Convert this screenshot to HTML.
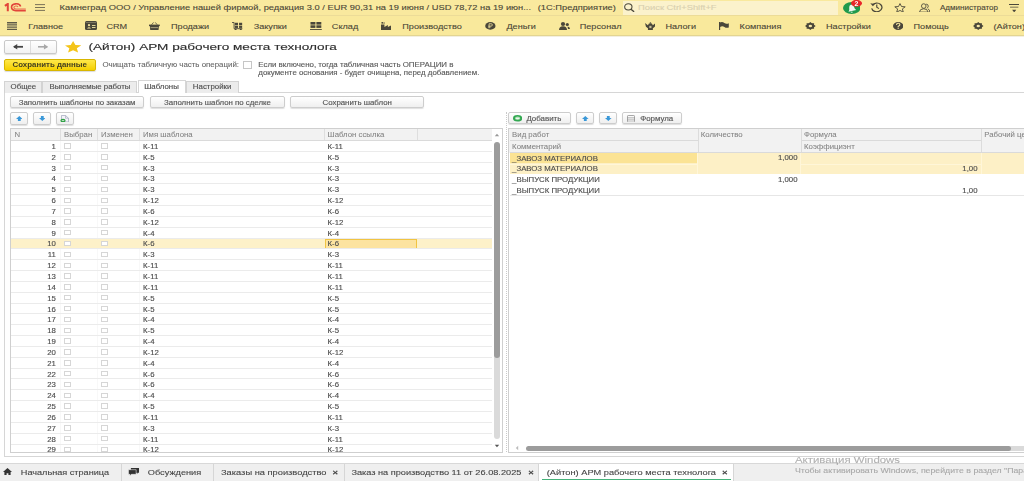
<!DOCTYPE html><html><head><meta charset="utf-8"><style>
*{margin:0;padding:0;box-sizing:border-box}
html,body{width:1024px;height:481px;overflow:hidden;background:#fff;font-family:"Liberation Sans",sans-serif}
#r{position:relative;width:1024px;height:481px;overflow:hidden;filter:blur(0.4px)}
#r div,#r span,#r svg{position:absolute}
.t{white-space:nowrap;color:#4d4d4d;-webkit-text-stroke:0.15px currentColor}
</style></head><body><div id="r"><div style="left:0px;top:0px;width:1024px;height:15.5px;background:#f9e99e"></div>
<div style="left:0px;top:15px;width:1024px;height:1px;background:#ecdc98"></div>
<div style="left:0px;top:16px;width:1024px;height:19px;background:#f9e99c"></div>
<div style="left:0px;top:34.6px;width:1024px;height:1px;background:#e3d592"></div>
<div style="left:0px;top:35.6px;width:1024px;height:1px;background:#f3efe0"></div>
<span class="t" style="left:59.6px;top:2.2px;font-size:9.33px;line-height:11.2px;transform:scaleY(0.82);color:#4a4636;-webkit-text-stroke:0.12px">Камнеград ООО / Управление нашей фирмой, редакция 3.0 / EUR 90,31 на 19 июня / USD 78,72 на 19 июн...</span>
<span class="t" style="left:537.7px;top:2.2px;font-size:9.33px;line-height:11.2px;transform:scaleY(0.82);color:#4a4636;-webkit-text-stroke:0.12px">(1С:Предприятие)</span>
<div style="left:622.5px;top:1px;width:215px;height:13.6px;background:#fbf2cc"></div>
<span class="t" style="left:638px;top:2.16px;font-size:9.4px;line-height:11.28px;transform:scaleY(0.82);color:#d9d0b0">Поиск Ctrl+Shift+F</span>
<span class="t" style="left:940px;top:2.97px;font-size:8.04px;line-height:9.65px;transform:scaleY(0.82);color:#4a4636;-webkit-text-stroke:0.12px">Администратор</span>
<span class="t" style="left:28.3px;top:20.51px;font-size:9.15px;line-height:10.98px;transform:scaleY(0.82);color:#4a4636;-webkit-text-stroke:0.12px">Главное</span>
<span class="t" style="left:106.4px;top:20.51px;font-size:9.15px;line-height:10.98px;transform:scaleY(0.82);color:#4a4636;-webkit-text-stroke:0.12px">CRM</span>
<span class="t" style="left:171px;top:20.51px;font-size:9.15px;line-height:10.98px;transform:scaleY(0.82);color:#4a4636;-webkit-text-stroke:0.12px">Продажи</span>
<span class="t" style="left:253.7px;top:20.51px;font-size:9.15px;line-height:10.98px;transform:scaleY(0.82);color:#4a4636;-webkit-text-stroke:0.12px">Закупки</span>
<span class="t" style="left:331.8px;top:20.51px;font-size:9.15px;line-height:10.98px;transform:scaleY(0.82);color:#4a4636;-webkit-text-stroke:0.12px">Склад</span>
<span class="t" style="left:402.3px;top:20.51px;font-size:9.15px;line-height:10.98px;transform:scaleY(0.82);color:#4a4636;-webkit-text-stroke:0.12px">Производство</span>
<span class="t" style="left:506.4px;top:20.51px;font-size:9.15px;line-height:10.98px;transform:scaleY(0.82);color:#4a4636;-webkit-text-stroke:0.12px">Деньги</span>
<span class="t" style="left:579.7px;top:20.51px;font-size:9.15px;line-height:10.98px;transform:scaleY(0.82);color:#4a4636;-webkit-text-stroke:0.12px">Персонал</span>
<span class="t" style="left:665.4px;top:20.51px;font-size:9.15px;line-height:10.98px;transform:scaleY(0.82);color:#4a4636;-webkit-text-stroke:0.12px">Налоги</span>
<span class="t" style="left:739.6px;top:20.51px;font-size:9.15px;line-height:10.98px;transform:scaleY(0.82);color:#4a4636;-webkit-text-stroke:0.12px">Компания</span>
<span class="t" style="left:826px;top:20.51px;font-size:9.15px;line-height:10.98px;transform:scaleY(0.82);color:#4a4636;-webkit-text-stroke:0.12px">Настройки</span>
<span class="t" style="left:913.5px;top:20.51px;font-size:9.15px;line-height:10.98px;transform:scaleY(0.82);color:#4a4636;-webkit-text-stroke:0.12px">Помощь</span>
<span class="t" style="left:993.5px;top:20.51px;font-size:9.15px;line-height:10.98px;transform:scaleY(0.82);color:#4a4636;-webkit-text-stroke:0.12px">(Айтон) АРМ рабочего места технолога</span>
<div style="left:4px;top:40px;width:53px;height:14px;border:1px solid #c9c9c9;border-radius:2px;background:linear-gradient(#fff,#f2f2f2);box-shadow:0 1px 1px rgba(0,0,0,.12)"></div>
<div style="left:30px;top:41px;width:1px;height:12px;background:#dcdcdc"></div>
<span class="t" style="left:88.5px;top:39.44px;font-size:13.6px;line-height:16.32px;transform:scaleY(0.72);color:#2e2e2e;-webkit-text-stroke:0.2px #2e2e2e">(Айтон) АРМ рабочего места технолога</span>
<div style="left:4px;top:59px;width:92px;height:12px;border:1px solid #d8b600;border-radius:2px;background:linear-gradient(#ffe84a,#f5d000);box-shadow:0 1px 1px rgba(0,0,0,.15)"></div>
<span class="t" style="left:12.5px;top:60.46px;font-size:7.9px;line-height:9.48px;transform:scaleY(0.82);color:#45411f;font-weight:bold;-webkit-text-stroke:0">Сохранить данные</span>
<span class="t" style="left:102.4px;top:60.26px;font-size:7.9px;line-height:9.48px;transform:scaleY(0.82);color:#666;-webkit-text-stroke:0.1px">Очищать табличную часть операций:</span>
<div style="left:243px;top:61px;width:9px;height:8px;border:1px solid #c6c6c6;background:#fff"></div>
<span class="t" style="left:258.3px;top:59.96px;font-size:7.9px;line-height:9.48px;transform:scaleY(0.82);color:#5a5a5a;-webkit-text-stroke:0.15px">Если включено, тогда табличная часть ОПЕРАЦИИ в</span>
<span class="t" style="left:258.3px;top:68.16px;font-size:7.9px;line-height:9.48px;transform:scaleY(0.82);color:#5a5a5a;-webkit-text-stroke:0.15px">документе основания - будет очищена, перед добавлением.</span>
<div style="left:4px;top:92px;width:1030px;height:365px;border:1px solid #d6d6d6;background:#fff"></div>
<div style="left:4.4px;top:81px;width:38.0px;height:11.5px;border:1px solid #d3d3d3;border-bottom:none;background:#ececec"></div>
<span class="t" style="left:23.4px;top:81.69px;font-size:7.85px;line-height:9.42px;transform:translateX(-50%) scaleY(0.8);color:#4f4f4f;;-webkit-text-stroke:0.15px">Общее</span>
<div style="left:42.4px;top:81px;width:95.1px;height:11.5px;border:1px solid #d3d3d3;border-bottom:none;background:#ececec"></div>
<span class="t" style="left:89.95px;top:81.69px;font-size:7.85px;line-height:9.42px;transform:translateX(-50%) scaleY(0.8);color:#4f4f4f;;-webkit-text-stroke:0.15px">Выполняемые работы</span>
<div style="left:137.5px;top:80px;width:48.0px;height:13px;border:1px solid #d6d6d6;border-bottom:none;background:#fff"></div>
<span class="t" style="left:161.5px;top:81.69px;font-size:7.85px;line-height:9.42px;transform:translateX(-50%) scaleY(0.8);color:#4f4f4f;;-webkit-text-stroke:0.15px">Шаблоны</span>
<div style="left:185.5px;top:81px;width:53.19999999999999px;height:11.5px;border:1px solid #d3d3d3;border-bottom:none;background:#ececec"></div>
<span class="t" style="left:212.1px;top:81.69px;font-size:7.85px;line-height:9.42px;transform:translateX(-50%) scaleY(0.8);color:#4f4f4f;;-webkit-text-stroke:0.15px">Настройки</span>
<div style="left:10px;top:96px;width:134px;height:12px;border:1px solid #cdcdcd;border-radius:2px;background:linear-gradient(#fff,#efefef);box-shadow:0 1px 1px rgba(0,0,0,.13)"></div>
<span class="t" style="left:77.1px;top:97.69px;font-size:7.85px;line-height:9.42px;transform:translateX(-50%) scaleY(0.82);;color:#555">Заполнить шаблоны по заказам</span>
<div style="left:150px;top:96px;width:135px;height:12px;border:1px solid #cdcdcd;border-radius:2px;background:linear-gradient(#fff,#efefef);box-shadow:0 1px 1px rgba(0,0,0,.13)"></div>
<span class="t" style="left:217.5px;top:97.69px;font-size:7.85px;line-height:9.42px;transform:translateX(-50%) scaleY(0.82);;color:#555">Заполнить шаблон по сделке</span>
<div style="left:290px;top:96px;width:134px;height:12px;border:1px solid #cdcdcd;border-radius:2px;background:linear-gradient(#fff,#efefef);box-shadow:0 1px 1px rgba(0,0,0,.13)"></div>
<span class="t" style="left:357.2px;top:97.69px;font-size:7.85px;line-height:9.42px;transform:translateX(-50%) scaleY(0.82);;color:#555">Сохранить шаблон</span>
<div style="left:10px;top:112px;width:18px;height:13px;border:1px solid #cdcdcd;border-radius:2px;background:linear-gradient(#fff,#efefef);box-shadow:0 1px 1px rgba(0,0,0,.13)"></div>
<div style="left:33px;top:112px;width:18px;height:13px;border:1px solid #cdcdcd;border-radius:2px;background:linear-gradient(#fff,#efefef);box-shadow:0 1px 1px rgba(0,0,0,.13)"></div>
<div style="left:56px;top:112px;width:18px;height:13px;border:1px solid #cdcdcd;border-radius:2px;background:linear-gradient(#fff,#efefef);box-shadow:0 1px 1px rgba(0,0,0,.13)"></div>
<div style="left:10px;top:128px;width:493px;height:325px;border:1px solid #cfcfcf;background:#fff"></div>
<div style="left:11px;top:129px;width:481px;height:12px;background:#f2f2f2;border-bottom:1px solid #dadada"></div>
<div style="left:60px;top:129px;width:1px;height:11px;background:#dedede"></div>
<div style="left:97px;top:129px;width:1px;height:11px;background:#dedede"></div>
<div style="left:139px;top:129px;width:1px;height:11px;background:#dedede"></div>
<div style="left:324px;top:129px;width:1px;height:11px;background:#dedede"></div>
<div style="left:417px;top:129px;width:1px;height:11px;background:#dedede"></div>
<span class="t" style="left:14.4px;top:129.72px;font-size:7.8px;line-height:9.36px;transform:scaleY(0.82);color:#808080;-webkit-text-stroke:0.05px">N</span>
<span class="t" style="left:64px;top:129.72px;font-size:7.8px;line-height:9.36px;transform:scaleY(0.82);color:#808080;-webkit-text-stroke:0.05px">Выбран</span>
<span class="t" style="left:101px;top:129.72px;font-size:7.8px;line-height:9.36px;transform:scaleY(0.82);color:#808080;-webkit-text-stroke:0.05px">Изменен</span>
<span class="t" style="left:143px;top:129.72px;font-size:7.8px;line-height:9.36px;transform:scaleY(0.82);color:#808080;-webkit-text-stroke:0.05px">Имя шаблона</span>
<span class="t" style="left:327.5px;top:129.72px;font-size:7.8px;line-height:9.36px;transform:scaleY(0.82);color:#808080;-webkit-text-stroke:0.05px">Шаблон ссылка</span>
<div style="left:11px;top:141px;width:481px;height:311px;overflow:hidden">
<div style="left:49px;top:0;width:1px;height:311px;background:#f8f8f8"></div>
<div style="left:86px;top:0;width:1px;height:311px;background:#f8f8f8"></div>
<div style="left:128px;top:0;width:1px;height:311px;background:#f8f8f8"></div>
<div style="left:0;top:9.84px;width:481px;height:1px;background:#ebebeb"></div>
<span class="t" style="right:436.20px;top:0.92px;font-size:7.8px;line-height:10px;transform:scaleY(0.82)">1</span>
<div style="left:53.00px;top:2.32px;width:6.6px;height:5.4px;border:1px solid #d6d6d6;background:#fff"></div>
<div style="left:90.25px;top:2.32px;width:6.6px;height:5.4px;border:1px solid #d6d6d6;background:#fff"></div>
<span class="t" style="left:132.00px;top:0.92px;font-size:7.8px;line-height:10px;transform:scaleY(0.82)">К-11</span>
<span class="t" style="left:316.50px;top:0.92px;font-size:7.8px;line-height:10px;transform:scaleY(0.82)">К-11</span>
<div style="left:0;top:20.68px;width:481px;height:1px;background:#ebebeb"></div>
<span class="t" style="right:436.20px;top:11.76px;font-size:7.8px;line-height:10px;transform:scaleY(0.82)">2</span>
<div style="left:53.00px;top:13.16px;width:6.6px;height:5.4px;border:1px solid #d6d6d6;background:#fff"></div>
<div style="left:90.25px;top:13.16px;width:6.6px;height:5.4px;border:1px solid #d6d6d6;background:#fff"></div>
<span class="t" style="left:132.00px;top:11.76px;font-size:7.8px;line-height:10px;transform:scaleY(0.82)">К-5</span>
<span class="t" style="left:316.50px;top:11.76px;font-size:7.8px;line-height:10px;transform:scaleY(0.82)">К-5</span>
<div style="left:0;top:31.52px;width:481px;height:1px;background:#ebebeb"></div>
<span class="t" style="right:436.20px;top:22.60px;font-size:7.8px;line-height:10px;transform:scaleY(0.82)">3</span>
<div style="left:53.00px;top:24.00px;width:6.6px;height:5.4px;border:1px solid #d6d6d6;background:#fff"></div>
<div style="left:90.25px;top:24.00px;width:6.6px;height:5.4px;border:1px solid #d6d6d6;background:#fff"></div>
<span class="t" style="left:132.00px;top:22.60px;font-size:7.8px;line-height:10px;transform:scaleY(0.82)">К-3</span>
<span class="t" style="left:316.50px;top:22.60px;font-size:7.8px;line-height:10px;transform:scaleY(0.82)">К-3</span>
<div style="left:0;top:42.36px;width:481px;height:1px;background:#ebebeb"></div>
<span class="t" style="right:436.20px;top:33.44px;font-size:7.8px;line-height:10px;transform:scaleY(0.82)">4</span>
<div style="left:53.00px;top:34.84px;width:6.6px;height:5.4px;border:1px solid #d6d6d6;background:#fff"></div>
<div style="left:90.25px;top:34.84px;width:6.6px;height:5.4px;border:1px solid #d6d6d6;background:#fff"></div>
<span class="t" style="left:132.00px;top:33.44px;font-size:7.8px;line-height:10px;transform:scaleY(0.82)">К-3</span>
<span class="t" style="left:316.50px;top:33.44px;font-size:7.8px;line-height:10px;transform:scaleY(0.82)">К-3</span>
<div style="left:0;top:53.20px;width:481px;height:1px;background:#ebebeb"></div>
<span class="t" style="right:436.20px;top:44.28px;font-size:7.8px;line-height:10px;transform:scaleY(0.82)">5</span>
<div style="left:53.00px;top:45.68px;width:6.6px;height:5.4px;border:1px solid #d6d6d6;background:#fff"></div>
<div style="left:90.25px;top:45.68px;width:6.6px;height:5.4px;border:1px solid #d6d6d6;background:#fff"></div>
<span class="t" style="left:132.00px;top:44.28px;font-size:7.8px;line-height:10px;transform:scaleY(0.82)">К-3</span>
<span class="t" style="left:316.50px;top:44.28px;font-size:7.8px;line-height:10px;transform:scaleY(0.82)">К-3</span>
<div style="left:0;top:64.04px;width:481px;height:1px;background:#ebebeb"></div>
<span class="t" style="right:436.20px;top:55.12px;font-size:7.8px;line-height:10px;transform:scaleY(0.82)">6</span>
<div style="left:53.00px;top:56.52px;width:6.6px;height:5.4px;border:1px solid #d6d6d6;background:#fff"></div>
<div style="left:90.25px;top:56.52px;width:6.6px;height:5.4px;border:1px solid #d6d6d6;background:#fff"></div>
<span class="t" style="left:132.00px;top:55.12px;font-size:7.8px;line-height:10px;transform:scaleY(0.82)">К-12</span>
<span class="t" style="left:316.50px;top:55.12px;font-size:7.8px;line-height:10px;transform:scaleY(0.82)">К-12</span>
<div style="left:0;top:74.88px;width:481px;height:1px;background:#ebebeb"></div>
<span class="t" style="right:436.20px;top:65.96px;font-size:7.8px;line-height:10px;transform:scaleY(0.82)">7</span>
<div style="left:53.00px;top:67.36px;width:6.6px;height:5.4px;border:1px solid #d6d6d6;background:#fff"></div>
<div style="left:90.25px;top:67.36px;width:6.6px;height:5.4px;border:1px solid #d6d6d6;background:#fff"></div>
<span class="t" style="left:132.00px;top:65.96px;font-size:7.8px;line-height:10px;transform:scaleY(0.82)">К-6</span>
<span class="t" style="left:316.50px;top:65.96px;font-size:7.8px;line-height:10px;transform:scaleY(0.82)">К-6</span>
<div style="left:0;top:85.72px;width:481px;height:1px;background:#ebebeb"></div>
<span class="t" style="right:436.20px;top:76.80px;font-size:7.8px;line-height:10px;transform:scaleY(0.82)">8</span>
<div style="left:53.00px;top:78.20px;width:6.6px;height:5.4px;border:1px solid #d6d6d6;background:#fff"></div>
<div style="left:90.25px;top:78.20px;width:6.6px;height:5.4px;border:1px solid #d6d6d6;background:#fff"></div>
<span class="t" style="left:132.00px;top:76.80px;font-size:7.8px;line-height:10px;transform:scaleY(0.82)">К-12</span>
<span class="t" style="left:316.50px;top:76.80px;font-size:7.8px;line-height:10px;transform:scaleY(0.82)">К-12</span>
<div style="left:0;top:96.56px;width:481px;height:1px;background:#ebebeb"></div>
<span class="t" style="right:436.20px;top:87.64px;font-size:7.8px;line-height:10px;transform:scaleY(0.82)">9</span>
<div style="left:53.00px;top:89.04px;width:6.6px;height:5.4px;border:1px solid #d6d6d6;background:#fff"></div>
<div style="left:90.25px;top:89.04px;width:6.6px;height:5.4px;border:1px solid #d6d6d6;background:#fff"></div>
<span class="t" style="left:132.00px;top:87.64px;font-size:7.8px;line-height:10px;transform:scaleY(0.82)">К-4</span>
<span class="t" style="left:316.50px;top:87.64px;font-size:7.8px;line-height:10px;transform:scaleY(0.82)">К-4</span>
<div style="left:0;top:97.56px;width:481px;height:10.84px;background:#fdf1c9"></div>
<div style="left:313.60px;top:97.96px;width:92.3px;height:10.04px;border:1px solid #f1c442;background:#fce3a0"></div>
<div style="left:0;top:107.40px;width:481px;height:1px;background:#ebebeb"></div>
<span class="t" style="right:436.20px;top:98.48px;font-size:7.8px;line-height:10px;transform:scaleY(0.82)">10</span>
<div style="left:53.00px;top:99.88px;width:6.6px;height:5.4px;border:1px solid #d6d6d6;background:#fff"></div>
<div style="left:90.25px;top:99.88px;width:6.6px;height:5.4px;border:1px solid #d6d6d6;background:#fff"></div>
<span class="t" style="left:132.00px;top:98.48px;font-size:7.8px;line-height:10px;transform:scaleY(0.82)">К-6</span>
<span class="t" style="left:316.50px;top:98.48px;font-size:7.8px;line-height:10px;transform:scaleY(0.82)">К-6</span>
<div style="left:0;top:118.24px;width:481px;height:1px;background:#ebebeb"></div>
<span class="t" style="right:436.20px;top:109.32px;font-size:7.8px;line-height:10px;transform:scaleY(0.82)">11</span>
<div style="left:53.00px;top:110.72px;width:6.6px;height:5.4px;border:1px solid #d6d6d6;background:#fff"></div>
<div style="left:90.25px;top:110.72px;width:6.6px;height:5.4px;border:1px solid #d6d6d6;background:#fff"></div>
<span class="t" style="left:132.00px;top:109.32px;font-size:7.8px;line-height:10px;transform:scaleY(0.82)">К-3</span>
<span class="t" style="left:316.50px;top:109.32px;font-size:7.8px;line-height:10px;transform:scaleY(0.82)">К-3</span>
<div style="left:0;top:129.08px;width:481px;height:1px;background:#ebebeb"></div>
<span class="t" style="right:436.20px;top:120.16px;font-size:7.8px;line-height:10px;transform:scaleY(0.82)">12</span>
<div style="left:53.00px;top:121.56px;width:6.6px;height:5.4px;border:1px solid #d6d6d6;background:#fff"></div>
<div style="left:90.25px;top:121.56px;width:6.6px;height:5.4px;border:1px solid #d6d6d6;background:#fff"></div>
<span class="t" style="left:132.00px;top:120.16px;font-size:7.8px;line-height:10px;transform:scaleY(0.82)">К-11</span>
<span class="t" style="left:316.50px;top:120.16px;font-size:7.8px;line-height:10px;transform:scaleY(0.82)">К-11</span>
<div style="left:0;top:139.92px;width:481px;height:1px;background:#ebebeb"></div>
<span class="t" style="right:436.20px;top:131.00px;font-size:7.8px;line-height:10px;transform:scaleY(0.82)">13</span>
<div style="left:53.00px;top:132.40px;width:6.6px;height:5.4px;border:1px solid #d6d6d6;background:#fff"></div>
<div style="left:90.25px;top:132.40px;width:6.6px;height:5.4px;border:1px solid #d6d6d6;background:#fff"></div>
<span class="t" style="left:132.00px;top:131.00px;font-size:7.8px;line-height:10px;transform:scaleY(0.82)">К-11</span>
<span class="t" style="left:316.50px;top:131.00px;font-size:7.8px;line-height:10px;transform:scaleY(0.82)">К-11</span>
<div style="left:0;top:150.76px;width:481px;height:1px;background:#ebebeb"></div>
<span class="t" style="right:436.20px;top:141.84px;font-size:7.8px;line-height:10px;transform:scaleY(0.82)">14</span>
<div style="left:53.00px;top:143.24px;width:6.6px;height:5.4px;border:1px solid #d6d6d6;background:#fff"></div>
<div style="left:90.25px;top:143.24px;width:6.6px;height:5.4px;border:1px solid #d6d6d6;background:#fff"></div>
<span class="t" style="left:132.00px;top:141.84px;font-size:7.8px;line-height:10px;transform:scaleY(0.82)">К-11</span>
<span class="t" style="left:316.50px;top:141.84px;font-size:7.8px;line-height:10px;transform:scaleY(0.82)">К-11</span>
<div style="left:0;top:161.60px;width:481px;height:1px;background:#ebebeb"></div>
<span class="t" style="right:436.20px;top:152.68px;font-size:7.8px;line-height:10px;transform:scaleY(0.82)">15</span>
<div style="left:53.00px;top:154.08px;width:6.6px;height:5.4px;border:1px solid #d6d6d6;background:#fff"></div>
<div style="left:90.25px;top:154.08px;width:6.6px;height:5.4px;border:1px solid #d6d6d6;background:#fff"></div>
<span class="t" style="left:132.00px;top:152.68px;font-size:7.8px;line-height:10px;transform:scaleY(0.82)">К-5</span>
<span class="t" style="left:316.50px;top:152.68px;font-size:7.8px;line-height:10px;transform:scaleY(0.82)">К-5</span>
<div style="left:0;top:172.44px;width:481px;height:1px;background:#ebebeb"></div>
<span class="t" style="right:436.20px;top:163.52px;font-size:7.8px;line-height:10px;transform:scaleY(0.82)">16</span>
<div style="left:53.00px;top:164.92px;width:6.6px;height:5.4px;border:1px solid #d6d6d6;background:#fff"></div>
<div style="left:90.25px;top:164.92px;width:6.6px;height:5.4px;border:1px solid #d6d6d6;background:#fff"></div>
<span class="t" style="left:132.00px;top:163.52px;font-size:7.8px;line-height:10px;transform:scaleY(0.82)">К-5</span>
<span class="t" style="left:316.50px;top:163.52px;font-size:7.8px;line-height:10px;transform:scaleY(0.82)">К-5</span>
<div style="left:0;top:183.28px;width:481px;height:1px;background:#ebebeb"></div>
<span class="t" style="right:436.20px;top:174.36px;font-size:7.8px;line-height:10px;transform:scaleY(0.82)">17</span>
<div style="left:53.00px;top:175.76px;width:6.6px;height:5.4px;border:1px solid #d6d6d6;background:#fff"></div>
<div style="left:90.25px;top:175.76px;width:6.6px;height:5.4px;border:1px solid #d6d6d6;background:#fff"></div>
<span class="t" style="left:132.00px;top:174.36px;font-size:7.8px;line-height:10px;transform:scaleY(0.82)">К-4</span>
<span class="t" style="left:316.50px;top:174.36px;font-size:7.8px;line-height:10px;transform:scaleY(0.82)">К-4</span>
<div style="left:0;top:194.12px;width:481px;height:1px;background:#ebebeb"></div>
<span class="t" style="right:436.20px;top:185.20px;font-size:7.8px;line-height:10px;transform:scaleY(0.82)">18</span>
<div style="left:53.00px;top:186.60px;width:6.6px;height:5.4px;border:1px solid #d6d6d6;background:#fff"></div>
<div style="left:90.25px;top:186.60px;width:6.6px;height:5.4px;border:1px solid #d6d6d6;background:#fff"></div>
<span class="t" style="left:132.00px;top:185.20px;font-size:7.8px;line-height:10px;transform:scaleY(0.82)">К-5</span>
<span class="t" style="left:316.50px;top:185.20px;font-size:7.8px;line-height:10px;transform:scaleY(0.82)">К-5</span>
<div style="left:0;top:204.96px;width:481px;height:1px;background:#ebebeb"></div>
<span class="t" style="right:436.20px;top:196.04px;font-size:7.8px;line-height:10px;transform:scaleY(0.82)">19</span>
<div style="left:53.00px;top:197.44px;width:6.6px;height:5.4px;border:1px solid #d6d6d6;background:#fff"></div>
<div style="left:90.25px;top:197.44px;width:6.6px;height:5.4px;border:1px solid #d6d6d6;background:#fff"></div>
<span class="t" style="left:132.00px;top:196.04px;font-size:7.8px;line-height:10px;transform:scaleY(0.82)">К-4</span>
<span class="t" style="left:316.50px;top:196.04px;font-size:7.8px;line-height:10px;transform:scaleY(0.82)">К-4</span>
<div style="left:0;top:215.80px;width:481px;height:1px;background:#ebebeb"></div>
<span class="t" style="right:436.20px;top:206.88px;font-size:7.8px;line-height:10px;transform:scaleY(0.82)">20</span>
<div style="left:53.00px;top:208.28px;width:6.6px;height:5.4px;border:1px solid #d6d6d6;background:#fff"></div>
<div style="left:90.25px;top:208.28px;width:6.6px;height:5.4px;border:1px solid #d6d6d6;background:#fff"></div>
<span class="t" style="left:132.00px;top:206.88px;font-size:7.8px;line-height:10px;transform:scaleY(0.82)">К-12</span>
<span class="t" style="left:316.50px;top:206.88px;font-size:7.8px;line-height:10px;transform:scaleY(0.82)">К-12</span>
<div style="left:0;top:226.64px;width:481px;height:1px;background:#ebebeb"></div>
<span class="t" style="right:436.20px;top:217.72px;font-size:7.8px;line-height:10px;transform:scaleY(0.82)">21</span>
<div style="left:53.00px;top:219.12px;width:6.6px;height:5.4px;border:1px solid #d6d6d6;background:#fff"></div>
<div style="left:90.25px;top:219.12px;width:6.6px;height:5.4px;border:1px solid #d6d6d6;background:#fff"></div>
<span class="t" style="left:132.00px;top:217.72px;font-size:7.8px;line-height:10px;transform:scaleY(0.82)">К-4</span>
<span class="t" style="left:316.50px;top:217.72px;font-size:7.8px;line-height:10px;transform:scaleY(0.82)">К-4</span>
<div style="left:0;top:237.48px;width:481px;height:1px;background:#ebebeb"></div>
<span class="t" style="right:436.20px;top:228.56px;font-size:7.8px;line-height:10px;transform:scaleY(0.82)">22</span>
<div style="left:53.00px;top:229.96px;width:6.6px;height:5.4px;border:1px solid #d6d6d6;background:#fff"></div>
<div style="left:90.25px;top:229.96px;width:6.6px;height:5.4px;border:1px solid #d6d6d6;background:#fff"></div>
<span class="t" style="left:132.00px;top:228.56px;font-size:7.8px;line-height:10px;transform:scaleY(0.82)">К-6</span>
<span class="t" style="left:316.50px;top:228.56px;font-size:7.8px;line-height:10px;transform:scaleY(0.82)">К-6</span>
<div style="left:0;top:248.32px;width:481px;height:1px;background:#ebebeb"></div>
<span class="t" style="right:436.20px;top:239.40px;font-size:7.8px;line-height:10px;transform:scaleY(0.82)">23</span>
<div style="left:53.00px;top:240.80px;width:6.6px;height:5.4px;border:1px solid #d6d6d6;background:#fff"></div>
<div style="left:90.25px;top:240.80px;width:6.6px;height:5.4px;border:1px solid #d6d6d6;background:#fff"></div>
<span class="t" style="left:132.00px;top:239.40px;font-size:7.8px;line-height:10px;transform:scaleY(0.82)">К-6</span>
<span class="t" style="left:316.50px;top:239.40px;font-size:7.8px;line-height:10px;transform:scaleY(0.82)">К-6</span>
<div style="left:0;top:259.16px;width:481px;height:1px;background:#ebebeb"></div>
<span class="t" style="right:436.20px;top:250.24px;font-size:7.8px;line-height:10px;transform:scaleY(0.82)">24</span>
<div style="left:53.00px;top:251.64px;width:6.6px;height:5.4px;border:1px solid #d6d6d6;background:#fff"></div>
<div style="left:90.25px;top:251.64px;width:6.6px;height:5.4px;border:1px solid #d6d6d6;background:#fff"></div>
<span class="t" style="left:132.00px;top:250.24px;font-size:7.8px;line-height:10px;transform:scaleY(0.82)">К-4</span>
<span class="t" style="left:316.50px;top:250.24px;font-size:7.8px;line-height:10px;transform:scaleY(0.82)">К-4</span>
<div style="left:0;top:270.00px;width:481px;height:1px;background:#ebebeb"></div>
<span class="t" style="right:436.20px;top:261.08px;font-size:7.8px;line-height:10px;transform:scaleY(0.82)">25</span>
<div style="left:53.00px;top:262.48px;width:6.6px;height:5.4px;border:1px solid #d6d6d6;background:#fff"></div>
<div style="left:90.25px;top:262.48px;width:6.6px;height:5.4px;border:1px solid #d6d6d6;background:#fff"></div>
<span class="t" style="left:132.00px;top:261.08px;font-size:7.8px;line-height:10px;transform:scaleY(0.82)">К-5</span>
<span class="t" style="left:316.50px;top:261.08px;font-size:7.8px;line-height:10px;transform:scaleY(0.82)">К-5</span>
<div style="left:0;top:280.84px;width:481px;height:1px;background:#ebebeb"></div>
<span class="t" style="right:436.20px;top:271.92px;font-size:7.8px;line-height:10px;transform:scaleY(0.82)">26</span>
<div style="left:53.00px;top:273.32px;width:6.6px;height:5.4px;border:1px solid #d6d6d6;background:#fff"></div>
<div style="left:90.25px;top:273.32px;width:6.6px;height:5.4px;border:1px solid #d6d6d6;background:#fff"></div>
<span class="t" style="left:132.00px;top:271.92px;font-size:7.8px;line-height:10px;transform:scaleY(0.82)">К-11</span>
<span class="t" style="left:316.50px;top:271.92px;font-size:7.8px;line-height:10px;transform:scaleY(0.82)">К-11</span>
<div style="left:0;top:291.68px;width:481px;height:1px;background:#ebebeb"></div>
<span class="t" style="right:436.20px;top:282.76px;font-size:7.8px;line-height:10px;transform:scaleY(0.82)">27</span>
<div style="left:53.00px;top:284.16px;width:6.6px;height:5.4px;border:1px solid #d6d6d6;background:#fff"></div>
<div style="left:90.25px;top:284.16px;width:6.6px;height:5.4px;border:1px solid #d6d6d6;background:#fff"></div>
<span class="t" style="left:132.00px;top:282.76px;font-size:7.8px;line-height:10px;transform:scaleY(0.82)">К-3</span>
<span class="t" style="left:316.50px;top:282.76px;font-size:7.8px;line-height:10px;transform:scaleY(0.82)">К-3</span>
<div style="left:0;top:302.52px;width:481px;height:1px;background:#ebebeb"></div>
<span class="t" style="right:436.20px;top:293.60px;font-size:7.8px;line-height:10px;transform:scaleY(0.82)">28</span>
<div style="left:53.00px;top:295.00px;width:6.6px;height:5.4px;border:1px solid #d6d6d6;background:#fff"></div>
<div style="left:90.25px;top:295.00px;width:6.6px;height:5.4px;border:1px solid #d6d6d6;background:#fff"></div>
<span class="t" style="left:132.00px;top:293.60px;font-size:7.8px;line-height:10px;transform:scaleY(0.82)">К-11</span>
<span class="t" style="left:316.50px;top:293.60px;font-size:7.8px;line-height:10px;transform:scaleY(0.82)">К-11</span>
<div style="left:0;top:313.36px;width:481px;height:1px;background:#ebebeb"></div>
<span class="t" style="right:436.20px;top:304.44px;font-size:7.8px;line-height:10px;transform:scaleY(0.82)">29</span>
<div style="left:53.00px;top:305.84px;width:6.6px;height:5.4px;border:1px solid #d6d6d6;background:#fff"></div>
<div style="left:90.25px;top:305.84px;width:6.6px;height:5.4px;border:1px solid #d6d6d6;background:#fff"></div>
<span class="t" style="left:132.00px;top:304.44px;font-size:7.8px;line-height:10px;transform:scaleY(0.82)">К-12</span>
<span class="t" style="left:316.50px;top:304.44px;font-size:7.8px;line-height:10px;transform:scaleY(0.82)">К-12</span>
</div>
<div style="left:494.2px;top:352px;width:5.8px;height:87px;background:#dadada;border-radius:3px"></div>
<div style="left:494.2px;top:141.5px;width:5.8px;height:216.7px;background:#9c9c9c;border-radius:3px"></div>
<svg style="left:494px;top:132px" width="6" height="6"><path d="M0.8 4.2L3 1.8L5.2 4.2Z" fill="#999"/></svg>
<svg style="left:494px;top:443px" width="6" height="6"><path d="M0.8 1.8L3 4.2L5.2 1.8Z" fill="#555"/></svg>
<div style="left:505.5px;top:112px;width:1px;height:340px;border-left:1px dotted #c9c9c9"></div>
<div style="left:508px;top:112px;width:63px;height:12px;border:1px solid #cdcdcd;border-radius:2px;background:linear-gradient(#fff,#efefef);box-shadow:0 1px 1px rgba(0,0,0,.13)"></div>
<span class="t" style="left:526.4px;top:113.86px;font-size:7.9px;line-height:9.48px;transform:scaleY(0.82);color:#555">Добавить</span>
<div style="left:576px;top:112px;width:18px;height:12px;border:1px solid #cdcdcd;border-radius:2px;background:linear-gradient(#fff,#efefef);box-shadow:0 1px 1px rgba(0,0,0,.13)"></div>
<div style="left:599px;top:112px;width:18px;height:12px;border:1px solid #cdcdcd;border-radius:2px;background:linear-gradient(#fff,#efefef);box-shadow:0 1px 1px rgba(0,0,0,.13)"></div>
<div style="left:622px;top:112px;width:60px;height:12px;border:1px solid #cdcdcd;border-radius:2px;background:linear-gradient(#fff,#efefef);box-shadow:0 1px 1px rgba(0,0,0,.13)"></div>
<span class="t" style="left:640.2px;top:113.86px;font-size:7.9px;line-height:9.48px;transform:scaleY(0.82);color:#555">Формула</span>
<div style="left:508px;top:128px;width:530px;height:325px;border:1px solid #cfcfcf;background:#fff"></div>
<div style="left:509px;top:129px;width:520px;height:23.5px;background:#f2f2f2"></div>
<div style="left:509.8px;top:140px;width:188px;height:1px;background:#dadada"></div>
<div style="left:800.5px;top:140px;width:181px;height:1px;background:#dadada"></div>
<div style="left:509.8px;top:152px;width:520px;height:1px;background:#dadada"></div>
<div style="left:697.5px;top:129.1px;width:1px;height:23px;background:#dcdcdc"></div>
<div style="left:800.5px;top:129.1px;width:1px;height:23px;background:#dcdcdc"></div>
<div style="left:981.25px;top:129.1px;width:1px;height:23px;background:#dcdcdc"></div>
<span class="t" style="left:512.1px;top:129.62px;font-size:7.8px;line-height:9.36px;transform:scaleY(0.82);color:#808080;-webkit-text-stroke:0.05px">Вид работ</span>
<span class="t" style="left:512.1px;top:141.72px;font-size:7.8px;line-height:9.36px;transform:scaleY(0.82);color:#808080;-webkit-text-stroke:0.05px">Комментарий</span>
<span class="t" style="left:700.75px;top:129.62px;font-size:7.8px;line-height:9.36px;transform:scaleY(0.82);color:#808080;-webkit-text-stroke:0.05px">Количество</span>
<span class="t" style="left:804px;top:129.62px;font-size:7.8px;line-height:9.36px;transform:scaleY(0.82);color:#808080;-webkit-text-stroke:0.05px">Формула</span>
<span class="t" style="left:804px;top:141.72px;font-size:7.8px;line-height:9.36px;transform:scaleY(0.82);color:#808080;-webkit-text-stroke:0.05px">Коэффициэнт</span>
<span class="t" style="left:984.25px;top:129.62px;font-size:7.8px;line-height:9.36px;transform:scaleY(0.82);color:#808080;-webkit-text-stroke:0.05px">Рабочий центр</span>
<div style="left:509.8px;top:153px;width:520px;height:21px;background:#fdf0c6"></div>
<div style="left:509.8px;top:153px;width:188px;height:10.3px;background:#fbe394"></div>
<span class="t" style="left:512.1px;top:153.62px;font-size:7.8px;line-height:9.36px;transform:scaleY(0.82);">_ЗАВОЗ МАТЕРИАЛОВ</span>
<span class="t" style="left:512.1px;top:164.32px;font-size:7.8px;line-height:9.36px;transform:scaleY(0.82);">_ЗАВОЗ МАТЕРИАЛОВ</span>
<span class="t" style="left:512.1px;top:174.82px;font-size:7.8px;line-height:9.36px;transform:scaleY(0.82);">_ВЫПУСК ПРОДУКЦИИ</span>
<span class="t" style="left:512.1px;top:185.82px;font-size:7.8px;line-height:9.36px;transform:scaleY(0.82);">_ВЫПУСК ПРОДУКЦИИ</span>
<span class="t" style="right:226.5px;top:153.32px;font-size:7.8px;line-height:9.36px;transform:scaleY(0.82);">1,000</span>
<span class="t" style="right:46.5px;top:164.32px;font-size:7.8px;line-height:9.36px;transform:scaleY(0.82);">1,00</span>
<span class="t" style="right:226.5px;top:174.82px;font-size:7.8px;line-height:9.36px;transform:scaleY(0.82);">1,000</span>
<span class="t" style="right:46.5px;top:185.82px;font-size:7.8px;line-height:9.36px;transform:scaleY(0.82);">1,00</span>
<div style="left:509.8px;top:195px;width:520px;height:1px;background:#e6e6e6"></div>
<div style="left:697px;top:153px;width:1px;height:21px;background:#fff6d8"></div>
<div style="left:800px;top:153px;width:1px;height:21px;background:#fff6d8"></div>
<div style="left:981px;top:153px;width:1px;height:21px;background:#fff6d8"></div>
<div style="left:800px;top:163.5px;width:181px;height:1px;background:#fff6d8"></div>
<div style="left:509.8px;top:163.5px;width:188px;height:1px;background:#fff6d8"></div>
<div style="left:1000px;top:446.2px;width:30px;height:4.4px;background:#dadada;border-radius:3px"></div>
<div style="left:525.5px;top:446.2px;width:485px;height:4.4px;background:#9c9c9c;border-radius:3px"></div>
<svg style="left:514px;top:445px" width="6" height="6"><path d="M4.2 0.8L1.8 3L4.2 5.2Z" fill="#bbb"/></svg>
<div style="left:0px;top:463px;width:1024px;height:18px;background:#efefef"></div>
<div style="left:120.6px;top:463px;width:1px;height:18px;background:#d6d6d6"></div>
<div style="left:213.3px;top:463px;width:1px;height:18px;background:#d6d6d6"></div>
<div style="left:343.8px;top:463px;width:1px;height:18px;background:#d6d6d6"></div>
<div style="left:538px;top:463px;width:195.5px;height:18px;background:#fff;border-left:1px solid #d6d6d6;border-right:1px solid #d6d6d6"></div>
<div style="left:0px;top:463px;width:1024px;height:1px;background:#d8d8d8"></div>
<div style="left:542.3px;top:478.6px;width:188.5px;height:1.2px;background:#46b37a"></div>
<span class="t" style="left:20.8px;top:467.12px;font-size:9.13px;line-height:10.96px;transform:scaleY(0.82);color:#444;-webkit-text-stroke:0.12px">Начальная страница</span>
<span class="t" style="left:147.8px;top:467.08px;font-size:9.2px;line-height:11.04px;transform:scaleY(0.82);color:#444;-webkit-text-stroke:0.12px">Обсуждения</span>
<span class="t" style="left:221px;top:467.02px;font-size:9.3px;line-height:11.16px;transform:scaleY(0.82);color:#444;-webkit-text-stroke:0.12px">Заказы на производство</span>
<span class="t" style="left:351.4px;top:467.08px;font-size:9.2px;line-height:11.04px;transform:scaleY(0.82);color:#444;-webkit-text-stroke:0.12px">Заказ на производство 11 от 26.08.2025</span>
<span class="t" style="left:546.7px;top:467.04px;font-size:9.27px;line-height:11.12px;transform:scaleY(0.82);color:#444;-webkit-text-stroke:0.12px">(Айтон) АРМ рабочего места технолога</span>
<span class="t" style="left:332.5px;top:466.7px;font-size:9.5px;line-height:11.4px;transform:scaleY(0.82);color:#444;font-weight:bold">×</span>
<span class="t" style="left:528.2px;top:466.7px;font-size:9.5px;line-height:11.4px;transform:scaleY(0.82);color:#444;font-weight:bold">×</span>
<span class="t" style="left:721.9px;top:466.7px;font-size:9.5px;line-height:11.4px;transform:scaleY(0.82);color:#444;font-weight:bold">×</span>
<span class="t" style="left:795px;top:454.16px;font-size:11.4px;line-height:13.68px;transform:scaleY(0.72);color:rgba(120,120,120,.55)">Активация Windows</span>
<span class="t" style="left:795px;top:464.85px;font-size:8.75px;line-height:10.5px;transform:scaleY(0.82);color:rgba(120,120,120,.55)">Чтобы активировать Windows, перейдите в раздел "Параметры".</span>
<svg style="left:3.5px;top:2.5px;" width="23" height="9" viewBox="0 0 23 9" preserveAspectRatio="none"><g fill="none" stroke="#e2453a"><path d="M0.9 2.9L3.8 0.9V8.3" stroke-width="2"/><path d="M16.6 3.4A4.6 3.4 0 1 0 11.8 7.6H21.8" stroke-width="1.6"/><path d="M14 4.1A2.1 1.5 0 1 0 11.8 6.0H21.8" stroke-width="1.2" stroke="#ea6f50"/></g></svg>
<svg style="left:35.2px;top:4px;" width="10.3" height="7" viewBox="0 0 10 7" preserveAspectRatio="none"><g stroke="#5a5646" stroke-width="0.8"><path d="M0 0.6H10M0 3.5H10M0 6.4H10"/></g></svg>
<svg style="left:7.3px;top:21.8px;" width="10" height="8.2" viewBox="0 0 10 8" preserveAspectRatio="none"><g stroke="#5e5a48" stroke-width="1.0"><path d="M0 0.6H10M0 2.3H10M0 4H10M0 5.7H10M0 7.4H10"/></g></svg>
<svg style="left:84.8px;top:21.2px;" width="12" height="9" viewBox="0 0 12 9" preserveAspectRatio="none"><rect x="0" y="0" width="12" height="9" rx="1.5" fill="#4a473a"/><rect x="0.8" y="1" width="10.4" height="1" fill="#7a7560"/><circle cx="4" cy="4.2" r="1.1" fill="#f2e4a0"/><path d="M2 7.5Q4 5.2 6 7.5Z" fill="#f2e4a0"/><path d="M7 4.5H10.5M7 6.5H10.5" stroke="#f2e4a0" stroke-width="0.9"/></svg>
<svg style="left:149.4px;top:22px;" width="10.8" height="8" viewBox="0 0 11 8" preserveAspectRatio="none"><path d="M2.6 2.8L4.6 0.4M8.4 2.8L6.4 0.4" stroke="#4a473a" stroke-width="0.8" fill="none"/><rect x="0" y="2.6" width="11" height="1.5" fill="#4a473a"/><path d="M0.8 4.1H10.2L9.7 7.9H1.3Z" fill="#4a473a"/><rect x="1.6" y="5.1" width="7.8" height="1" fill="#a59d7a"/></svg>
<svg style="left:232px;top:21.6px;" width="11.4" height="8.6" viewBox="0 0 11 9" preserveAspectRatio="none"><path d="M0 0.5H2V7H10" stroke="#4a473a" stroke-width="0.9" fill="none"/><rect x="2.8" y="0.8" width="3" height="2.4" fill="#4a473a"/><rect x="6.8" y="0.8" width="3" height="2.4" fill="#4a473a"/><rect x="2.8" y="3.8" width="3" height="2.4" fill="#4a473a"/><rect x="6.8" y="3.8" width="3" height="2.4" fill="#4a473a"/><circle cx="3.5" cy="8" r="1" fill="#4a473a"/><circle cx="8.5" cy="8" r="1" fill="#4a473a"/></svg>
<svg style="left:310.3px;top:22px;" width="11.8" height="8" viewBox="0 0 12 8" preserveAspectRatio="none"><rect x="0.5" y="0" width="5" height="2.6" fill="#4a473a"/><rect x="6.5" y="0" width="5" height="2.6" fill="#4a473a"/><rect x="0.5" y="3.3" width="5" height="2.6" fill="#4a473a"/><rect x="6.5" y="3.3" width="5" height="2.6" fill="#4a473a"/><rect x="0" y="7" width="12" height="0.9" fill="#4a473a"/></svg>
<svg style="left:380.7px;top:21.8px;" width="10.8" height="8.2" viewBox="0 0 11 8" preserveAspectRatio="none"><rect x="0.5" y="0" width="1.5" height="1.6" fill="#4a473a"/><rect x="2.5" y="0.4" width="1.2" height="1.2" fill="#4a473a"/><path d="M0 8V2.5H3.5V5L7 3V5L11 3V8Z" fill="#4a473a"/></svg>
<svg style="left:485px;top:22px;" width="10.7" height="7.8" viewBox="0 0 11 8" preserveAspectRatio="none"><ellipse cx="5.5" cy="4" rx="5.3" ry="3.9" fill="#4a473a"/><path d="M4.2 6.5V1.8H6.3A1.3 1.2 0 0 1 6.3 4.2H3.5M3.5 5.2H5.8" stroke="#f2e4a0" stroke-width="0.8" fill="none"/></svg>
<svg style="left:559px;top:22px;" width="11" height="8" viewBox="0 0 11 8" preserveAspectRatio="none"><ellipse cx="4" cy="2" rx="2.1" ry="1.9" fill="#4a473a"/><path d="M0 8Q0 4.2 4 4.2Q8 4.2 8 8Z" fill="#4a473a"/><ellipse cx="8.3" cy="2.6" rx="1.6" ry="1.5" fill="#4a473a"/><path d="M8.5 4.6Q11 4.8 11 7H9Z" fill="#4a473a"/></svg>
<svg style="left:644.5px;top:21.6px;" width="10.8" height="8.6" viewBox="0 0 11 9" preserveAspectRatio="none"><path d="M0 1L3 3.5L4 1.5H7L8 3.5L11 1L10 5L8 6.5V9H3V6.5L1 5Z" fill="#4a473a"/><circle cx="5.5" cy="1" r="0.8" fill="#4a473a"/><rect x="4.4" y="4" width="2.2" height="2.4" fill="#c7bd95"/></svg>
<svg style="left:718.8px;top:21.6px;" width="9.8" height="8.8" viewBox="0 0 10 9" preserveAspectRatio="none"><path d="M0.6 0V9" stroke="#4a473a" stroke-width="1.2"/><path d="M1 0.5Q3.5 -0.5 5.5 1T10 1.2V5.5Q7.5 6.5 5.5 5T1 5Z" fill="#4a473a"/></svg>
<svg style="left:804.9px;top:22px;" width="10.7" height="8" viewBox="0 0 10 10" preserveAspectRatio="none"><polygon points="10.00,5.00 8.42,6.42 8.54,8.54 6.42,8.42 5.00,10.00 3.58,8.42 1.46,8.54 1.58,6.42 0.00,5.00 1.58,3.58 1.46,1.46 3.58,1.58 5.00,0.00 6.42,1.58 8.54,1.46 8.42,3.58" fill="#4a473a"/><circle cx="5" cy="5" r="3.4" fill="#4a473a"/><circle cx="5" cy="5" r="1.6" fill="#f6e7a6"/></svg>
<svg style="left:973.3px;top:22px;" width="10.5" height="8" viewBox="0 0 10 10" preserveAspectRatio="none"><polygon points="10.00,5.00 8.42,6.42 8.54,8.54 6.42,8.42 5.00,10.00 3.58,8.42 1.46,8.54 1.58,6.42 0.00,5.00 1.58,3.58 1.46,1.46 3.58,1.58 5.00,0.00 6.42,1.58 8.54,1.46 8.42,3.58" fill="#4a473a"/><circle cx="5" cy="5" r="3.4" fill="#4a473a"/><circle cx="5" cy="5" r="1.6" fill="#f6e7a6"/></svg>
<svg style="left:892.8px;top:22px;" width="10.4" height="8" viewBox="0 0 10 8" preserveAspectRatio="none"><ellipse cx="5" cy="4" rx="5" ry="4" fill="#4a473a"/><path d="M3.4 3Q3.4 1.3 5 1.3Q6.6 1.3 6.6 2.8Q6.6 3.8 5 4.3V5.2" stroke="#f2e4a0" stroke-width="1.1" fill="none"/><rect x="4.4" y="5.8" width="1.2" height="1" fill="#f2e4a0"/></svg>
<svg style="left:624.4px;top:3.2px;" width="10.6" height="9.2" viewBox="0 0 11 10" preserveAspectRatio="none"><ellipse cx="4.5" cy="4.2" rx="3.8" ry="3.5" stroke="#4a473a" stroke-width="1.1" fill="none"/><path d="M7.2 6.8L10.5 9.6" stroke="#4a473a" stroke-width="1.4"/></svg>
<svg style="left:842.5px;top:1.6px;" width="17.5" height="12" viewBox="0 0 17.5 12" preserveAspectRatio="none"><ellipse cx="8.75" cy="6" rx="8.75" ry="6" fill="#1f9a4c"/><path d="M4.8 9Q6.3 7.6 6.3 5.3Q6.5 2.8 8.8 2.5Q11 2.8 11.2 5.3Q11.2 7.6 12.7 9Z" fill="#eef7ee" transform="rotate(-12 8.75 6)"/><path d="M7.8 10.2H9.6" stroke="#eef7ee" stroke-width="0.9"/></svg>
<svg style="left:851px;top:0px;" width="11" height="6.8" viewBox="0 0 11 7" preserveAspectRatio="none"><ellipse cx="5.5" cy="3.4" rx="5.5" ry="3.5" fill="#e8262a"/><text x="5.5" y="6.1" text-anchor="middle" font-family="Liberation Sans" font-weight="bold" font-size="7" fill="#fff">2</text></svg>
<svg style="left:870px;top:2.4px;" width="12.5" height="10" viewBox="0 0 12 10" preserveAspectRatio="none"><path d="M2.3 3A5 4.4 0 1 1 1.6 6.4" stroke="#4a473a" stroke-width="1.2" fill="none"/><path d="M0.3 1.2L2.8 4.3L4.8 1.9Z" fill="#4a473a"/><path d="M6.5 2.4V5.3L8.6 6.6" stroke="#4a473a" stroke-width="1.1" fill="none"/></svg>
<svg style="left:894px;top:2.6px;" width="12" height="9.8" viewBox="0 0 12 10" preserveAspectRatio="none"><path d="M6 0.6L7.5 3.6L11.2 3.9L8.4 6L9.3 9.4L6 7.6L2.7 9.4L3.6 6L0.8 3.9L4.5 3.6Z" stroke="#4a473a" stroke-width="0.9" fill="none" stroke-linejoin="round"/></svg>
<svg style="left:919px;top:2.6px;" width="11.4" height="9.6" viewBox="0 0 12 10" preserveAspectRatio="none"><ellipse cx="5" cy="3.2" rx="2.4" ry="2.4" stroke="#4a473a" stroke-width="0.9" fill="none"/><path d="M0.5 9.5Q0.8 6 5 6Q9.2 6 9.5 9.5Z" stroke="#4a473a" stroke-width="0.9" fill="none"/><path d="M7.5 1.2Q9.5 1 9.8 3.3Q9.6 5 8.2 5.5M9.5 6.2Q11.5 7 11.6 9.4H10" stroke="#4a473a" stroke-width="0.9" fill="none"/></svg>
<svg style="left:1008.6px;top:3.6px;" width="10.4" height="8.8" viewBox="0 0 10 9" preserveAspectRatio="none"><path d="M0 0.6H10M1 3.2H9" stroke="#4a473a" stroke-width="1"/><path d="M3 6H7L5 8.6Z" fill="#4a473a"/></svg>
<svg style="left:12.5px;top:44.2px;" width="10.2" height="5.6" viewBox="0 0 10 6" preserveAspectRatio="none"><path d="M1 3H10" stroke="#444" stroke-width="1.9"/><path d="M0 3L4.2 0V6Z" fill="#444"/></svg>
<svg style="left:38px;top:44.2px;" width="10.2" height="5.6" viewBox="0 0 10 6" preserveAspectRatio="none"><path d="M0 3H9" stroke="#a8a8a8" stroke-width="1.7"/><path d="M10 3L5.8 0V6Z" fill="#a8a8a8"/></svg>
<svg style="left:64.6px;top:41.3px;" width="16.2" height="11.4" viewBox="0 0 20 19" preserveAspectRatio="none"><path d="M10 0L12.9 6.6L20 7.3L14.6 12L16.2 19L10 15.3L3.8 19L5.4 12L0 7.3L7.1 6.6Z" fill="#f4c419"/></svg>
<svg style="left:15.9px;top:116.2px;" width="6.6" height="5" viewBox="0 0 7 5" preserveAspectRatio="none"><path d="M3.5 0L7 3H5V5H2V3H0Z" fill="#3a98d8"/></svg>
<svg style="left:38.9px;top:116.2px;" width="6.6" height="5" viewBox="0 0 7 5" preserveAspectRatio="none"><path d="M3.5 5L7 2H5V0H2V2H0Z" fill="#3a98d8"/></svg>
<svg style="left:60.3px;top:115px;" width="9" height="7.4" viewBox="0 0 9 8" preserveAspectRatio="none"><path d="M1.5 0.5H5.5L8.5 3.5V7.5H1.5Z" fill="#f4f4f8" stroke="#9aa0b8" stroke-width="0.7"/><path d="M5.5 0.5V3.5H8.5" fill="none" stroke="#9aa0b8" stroke-width="0.6"/><ellipse cx="3" cy="6" rx="2.6" ry="2" fill="#2ea043"/><path d="M1.8 6H4.2" stroke="#fff" stroke-width="0.7"/></svg>
<svg style="left:513.3px;top:115.3px;" width="9.2" height="6.6" viewBox="0 0 9 7" preserveAspectRatio="none"><ellipse cx="4.5" cy="3.5" rx="4.5" ry="3.5" fill="#33a852"/><ellipse cx="4.5" cy="3.5" rx="2.6" ry="1.9" fill="#a8dcb0"/><path d="M2.8 3.5H6.2" stroke="#fff" stroke-width="1"/></svg>
<svg style="left:582.2px;top:116.1px;" width="6.6" height="5" viewBox="0 0 7 5" preserveAspectRatio="none"><path d="M3.5 0L7 3H5V5H2V3H0Z" fill="#3a98d8"/></svg>
<svg style="left:605.2px;top:116.1px;" width="6.6" height="5" viewBox="0 0 7 5" preserveAspectRatio="none"><path d="M3.5 5L7 2H5V0H2V2H0Z" fill="#3a98d8"/></svg>
<svg style="left:627px;top:114.8px;" width="8" height="7.6" viewBox="0 0 8 8" preserveAspectRatio="none"><rect x="0.5" y="0.5" width="7" height="7" rx="0.8" fill="#fafafa" stroke="#8c8c8c" stroke-width="0.8"/><path d="M0.5 3H7.5M0.5 5.2H7.5" stroke="#8c8c8c" stroke-width="0.7"/></svg>
<svg style="left:3px;top:467.8px;" width="9" height="7.6" viewBox="0 0 9 7" preserveAspectRatio="none"><path d="M4.5 0L9 3.6H7.6V7H5.4V4.8H3.6V7H1.4V3.6H0Z" fill="#333"/></svg>
<svg style="left:128.2px;top:467.6px;" width="11.5" height="8.4" viewBox="0 0 12 9" preserveAspectRatio="none"><path d="M3 0H11.5V5H10V6.3L8.6 5H3Z" fill="#333"/><path d="M0.5 1.8H8.5V6.8H3.5L2 8.4V6.8H0.5Z" fill="#333" stroke="#eee" stroke-width="0.6"/></svg></div></body></html>
